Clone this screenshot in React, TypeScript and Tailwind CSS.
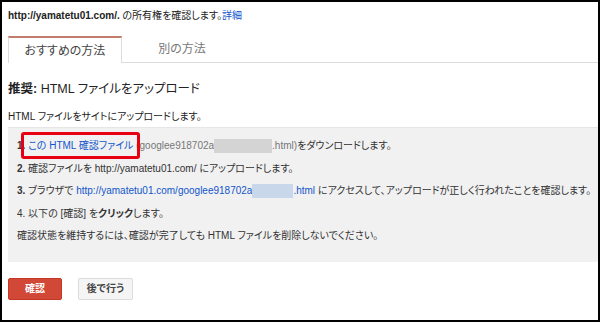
import React from "react";

const FONT = "[font-family:'Liberation_Sans','Noto_Sans_CJK_JP',sans-serif] [font-feature-settings:'palt']";

function Blur({ tone }: { tone: "gray" | "blue" }) {
  return (
    <span
      className={
        tone === "gray"
          ? "inline-block align-middle h-[14px] w-[58px] bg-[#d4d4d4]"
          : "inline-block align-middle h-[14px] w-[41px] bg-[#c9d7ea]"
      }
    />
  );
}

export default function App() {
  return (
    <div className={`${FONT} w-[600px] h-[322px] bg-white border-2 border-black pl-[6px] flex flex-col text-[#222]`}>
      {/* サイト確認ヘッダ */}
      <div className="mt-[7px] h-[14px] leading-[14px] text-[10px]">
        <span className="font-bold">http://yamatetu01.com/.</span> の所有権を確認します。
        <a className="text-[#1155cc]">詳細</a>
      </div>

      {/* タブ */}
      <div className="mt-[13px] flex h-[27px]">
        <div className="w-[114px] h-[27px] border-t-2 border-x border-t-[#c27c6e] border-x-[#dcdcdc] bg-white flex items-center justify-center text-[12px] text-[#444]">
          おすすめの方法
        </div>
        <div className="flex-1 border-b border-[#dcdcdc] flex">
          <div className="w-[120px] flex items-center justify-center text-[12px] text-[#777]">
            別の方法
          </div>
        </div>
      </div>

      {/* 見出し */}
      <div className="mt-[17px] h-[18px] leading-[18px] text-[12.5px] text-[#222]">
        <span className="font-bold">推奨:</span> HTML ファイルをアップロード
      </div>
      <div className="mt-[12px] h-[14px] leading-[14px] text-[10px]">
        HTML ファイルをサイトにアップロードします。
      </div>

      {/* 手順 */}
      <div className="mt-[3px] bg-[#f1f1f1] border-t border-[#e6e6e6] pl-[9px] pt-[7px] pb-[14px] text-[10px] text-[#333]">
        <div className="h-[22.5px] leading-[22.5px] whitespace-nowrap">
          <span className="font-bold">1.</span>{" "}
          <span className="relative">
            <a className="text-[#1155cc]">この HTML 確認ファイル</a> (
            <span className="absolute left-[-7px] right-[0px] top-[-8px] bottom-[-8px] border-[3px] border-[#e60012] rounded-[3px]" />
          </span>
          <span className="text-[#777]">googlee918702a</span>
          <Blur tone="gray" />
          <span className="text-[#777]">.html)</span>をダウンロードします。
        </div>
        <div className="h-[22.5px] leading-[22.5px] whitespace-nowrap">
          <span className="font-bold">2.</span> 確認ファイルを http://yamatetu01.com/ にアップロードします。
        </div>
        <div className="h-[22.5px] leading-[22.5px] whitespace-nowrap">
          <span className="font-bold">3.</span> ブラウザで{" "}
          <a className="text-[#1155cc]">http://yamatetu01.com/googlee918702a</a>
          <Blur tone="blue" />
          <a className="text-[#1155cc]">.html</a> にアクセスして、アップロードが正しく行われたことを確認します。
        </div>
        <div className="h-[22.5px] leading-[22.5px] whitespace-nowrap">
          4. 以下の [確認] を<span className="font-bold">クリック</span>します。
        </div>
        <div className="h-[22.5px] leading-[22.5px] whitespace-nowrap">
          確認状態を維持するには、確認が完了しても HTML ファイルを削除しないでください。
        </div>
      </div>

      {/* ボタン */}
      <div className="mt-[16px] flex gap-[16px]">
        <button className="w-[54px] h-[22px] rounded-[2px] bg-[#d14836] border border-[#c53727] text-white text-[10px] font-bold">
          確認
        </button>
        <button className="w-[55px] h-[22px] rounded-[2px] bg-[#f5f5f5] border border-[#dcdcdc] text-[#444] text-[10px] font-bold">
          後で行う
        </button>
      </div>
    </div>
  );
}
